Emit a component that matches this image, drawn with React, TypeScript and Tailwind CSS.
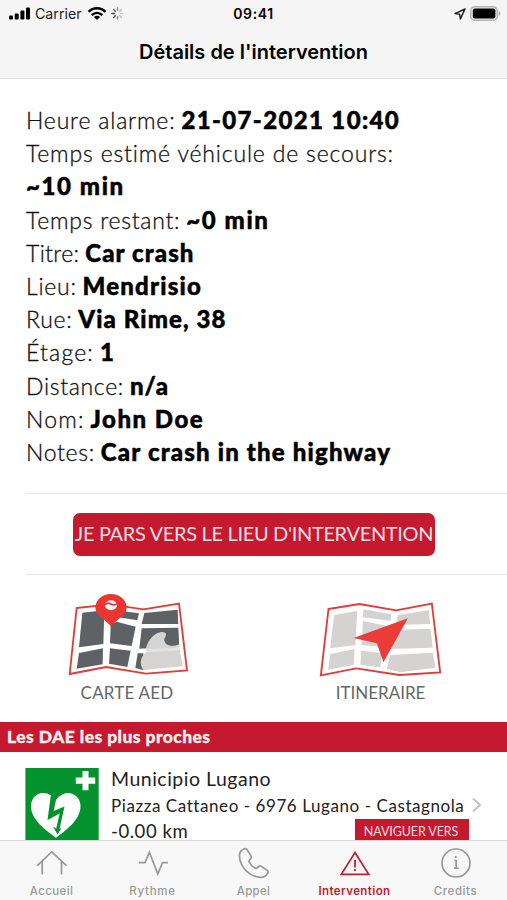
import type { ReactNode } from "react";

type Detail = { label: string; value: string; labelClass: string; valueClass: string; stacked?: boolean };

const details: Detail[] = [
  { label: "Heure alarme:", value: "21-07-2021 10:40", labelClass: "tracking-[0.82px]", valueClass: "tracking-[1.36px]" },
  { label: "Temps estimé véhicule de secours:", value: "~10 min", labelClass: "tracking-[0.83px]", valueClass: "tracking-[1.6px]", stacked: true },
  { label: "Temps restant:", value: "~0 min", labelClass: "tracking-[0.75px]", valueClass: "tracking-[1.6px]" },
  { label: "Titre:", value: "Car crash", labelClass: "tracking-[0.35px]", valueClass: "tracking-[1.1px]" },
  { label: "Lieu:", value: "Mendrisio", labelClass: "tracking-[0.75px]", valueClass: "tracking-[1.2px]" },
  { label: "Rue:", value: "Via Rime, 38", labelClass: "tracking-[0.7px]", valueClass: "tracking-[1.1px]" },
  { label: "Étage:", value: "1", labelClass: "tracking-[1.2px]", valueClass: "tracking-[0.6px]" },
  { label: "Distance:", value: "n/a", labelClass: "tracking-[0.68px]", valueClass: "tracking-[0.9px]" },
  { label: "Nom:", value: "John Doe", labelClass: "tracking-[1.2px]", valueClass: "tracking-[1.5px]" },
  { label: "Notes:", value: "Car crash in the highway", labelClass: "tracking-[0.7px]", valueClass: "tracking-[1.18px]" },
];

function StatusBar() {
  return (
    <div className="grid h-[27px] grid-cols-3 items-center">
      <div className="flex items-center pl-[9px]">
        <svg width="22" height="13" viewBox="0 0 22 13" fill="#000">
          <rect x="0" y="8.6" width="4" height="4" rx="1" />
          <rect x="5.7" y="6.4" width="4" height="6.2" rx="1" />
          <rect x="11.4" y="3.6" width="4" height="9" rx="1" />
          <rect x="17" y="0.4" width="4" height="12.2" rx="1" />
        </svg>
        <span className="ml-1 text-[14.2px] text-[#222]">Carrier</span>
        <svg className="ml-[5px]" width="20" height="15" viewBox="0 0 20 15" fill="none" stroke="#000">
          <path d="M1.6 5.8a11.8 11.8 0 0 1 16.8 0" strokeWidth="2.6" />
          <path d="M4.8 9.1a7.3 7.3 0 0 1 10.4 0" strokeWidth="2.4" />
          <path d="M10 14 6.9 11a4.4 4.4 0 0 1 6.2 0Z" fill="#000" stroke="none" />
        </svg>
        <svg className="ml-[4px]" width="13" height="13" viewBox="0 0 13 13" strokeWidth="1.4" strokeLinecap="round">
          <path d="M6.5 1v2.6" stroke="#888" />
          <path d="m10.4 2.6-1.8 1.8" stroke="#bbb" />
          <path d="M12 6.5H9.4" stroke="#ccc" />
          <path d="m10.4 10.4-1.8-1.8" stroke="#bbb" />
          <path d="M6.5 12V9.4" stroke="#888" />
          <path d="m2.6 10.4 1.8-1.8" stroke="#555" />
          <path d="M1 6.5h2.6" stroke="#444" />
          <path d="m2.6 2.6 1.8 1.8" stroke="#666" />
        </svg>
      </div>
      <div className="text-center text-[14px] font-semibold tracking-[0.6px]">09:41</div>
      <div className="flex items-center justify-end pr-[6px]">
        <svg width="12" height="12" viewBox="0 0 12 12" fill="none" stroke="#222" strokeWidth="1.5" strokeLinejoin="round">
          <path d="M11 1 1 5.6l4.7.7.7 4.7Z" />
        </svg>
        <svg className="ml-1" width="31" height="15" viewBox="0 0 31 15">
          <rect x="0.8" y="0.8" width="26.4" height="13.4" rx="3.8" fill="#eee" stroke="#b5b5b5" strokeWidth="1.5" />
          <rect x="2.8" y="2.6" width="22.6" height="9.8" rx="2" fill="#000" />
          <path d="M28.7 5v5c1.2-.5 1.7-1.4 1.7-2.5s-.5-2-1.7-2.500Z" fill="#aaa" />
        </svg>
      </div>
    </div>
  );
}

function AedMap() {
  return (
    <svg width="124" height="86" viewBox="45 24 372 258">
      <path d="M80 69 180 58 280 73 387 56 411 256 288 266 168 246 59 267Z" fill="#fff" stroke="#e23b38" strokeWidth="5.5" />
      <g fill="#5f6264">
        <path d="M97 83 163 76 160 177 87 187Z" />
        <path d="M87 204 159 190 158 238 80 251Z" />
        <path d="M215 78 267 85 262 106 205 97Z" />
        <path d="M182 118 200 110 257 125 245 183 180 175Z" />
        <path d="M180 190 242 197 232 246 177 236Z" />
        <path d="M283 84 383 74 385 117 275 117Z" />
        <path d="M275 130 385 128 388 184 268 191Z" />
        <path d="M263 205 280 205 282 256 256 249Z" />
      </g>
      <path d="M280 255C268 238 270 215 289 200 284 180 305 150 325 143 350 135 352 150 343 160 340 182 365 188 387 178L398 244Z" fill="#d6d4d3" />
      <path d="M270 200C310 190 350 200 392 190" fill="none" stroke="#fff" strokeWidth="9" opacity="0.35" />
      <path d="M183 124C170 105 136 92 136 68a47 41 0 0 1 94 0C230 92 196 105 183 124Z" fill="#ea3530" />
      <ellipse cx="183" cy="61" rx="18" ry="15" fill="#fff" />
      <path d="M163 60q10-9 19-3t20-1" stroke="#ea3530" strokeWidth="5" fill="none" />
    </svg>
  );
}

function RouteMap() {
  return (
    <svg width="124" height="86" viewBox="58.5 24 372 258">
      <path d="M87 72 180 57 290 76 397 56 422 262 300 270 170 250 64 271Z" fill="#fff" stroke="#e23b38" strokeWidth="5.5" />
      <g fill="#d5d3d1">
        <path d="M104 90 173 78 168 180 92 190Z" />
        <path d="M192 73 275 88 273 107 190 97Z" />
        <path d="M190 108 260 122 245 185 187 180Z" />
        <path d="M295 90 388 76 392 117 290 120Z" />
        <path d="M280 135 393 131 400 188 268 192Z" />
        <path d="M92 207 165 192 163 240 86 254Z" />
        <path d="M185 197 248 205 242 247 183 240Z" />
        <path d="M272 210 400 203 408 248 303 262 262 252Z" />
      </g>
      <path d="M325 100 162 159 232 175 252 232Z" fill="#ea3c38" />
    </svg>
  );
}

function AedSign() {
  return (
    <svg className="shrink-0" width="74" height="73" viewBox="0 0 74 73">
      <rect x="0.4" width="73.3" height="73" fill="#04922f" />
      <path d="M57.500 3h6v6.500h6.700v6.300h-6.700v6.500h-6v-6.500h-6.700V9.500h6.700Z" fill="#fff" />
      <path d="M31 69.700C22 63 6 52 6 38.500c0-8 5-13.500 12-13.500 6 0 10 3 13 7 3-4 7-7 12-7 7 0 12.500 5.500 12.500 13.500C55.500 52 40 63 31 69.700Z" fill="#fff" />
      <path d="m26 26 5.500 3.500L28.700 43l10.800-4.500L34.500 61l2-1L32.500 66.500 28 58.500l3.200 2L34.700 45.500 22.500 52Z" fill="#04922f" />
    </svg>
  );
}

const tabs: { name: string; active?: boolean; tracking: string; icon: ReactNode }[] = [
  { name: "Accueil", tracking: "tracking-[0.4px]", icon: <path d="M1.200 16.700 15.800 3l14.700 13.700M6.200 12.500V25.500M25.500 12.500V25.500" /> },
  { name: "Rythme", tracking: "tracking-[0.7px]", icon: <path d="M2 13.700h6L12.400 3.300 20.800 25 25.500 13.700h5.500" /> },
  { name: "Appel", tracking: "tracking-[0.3px]", icon: <path d="M6.500-.2C3.500.8 1.200 3.500 1.500 7.500 2.300 18.500 11.500 27.700 22.500 28.300c3.200.2 5.700-1.500 7.300-4.300.6-1 .3-1.900-.6-2.600l-5.700-4c-1-.7-2-.6-2.900.1l-1.800 1.500c-.7.5-1.300.5-2 .1-2.400-1.400-4.300-3.500-5.600-6-.4-.7-.3-1.300.2-1.900L12.700 9.500c.7-.8.7-1.700.2-2.600L9.300 1C8.700 0 7.700-.6 6.500-.2Z" /> },
  { name: "Intervention", active: true, tracking: "tracking-[0.4px]", icon: <><path d="M16 3.500 29.700 25.300H2.300Z" /><path d="M16 11v7.500M16 20v2" strokeWidth="1.800" /></> },
  { name: "Credits", tracking: "tracking-[0.6px]", icon: <><circle cx="16" cy="14" r="14" /><path d="M14.500 11.500h1.700V19M14 19.200h4.500M15.800 7v2" /></> },
];

export default function App() {
  return (
    <div className="flex h-[900px] w-[507px] flex-col overflow-hidden bg-white font-['Lato',sans-serif] text-black">
      <header className="h-[79px] shrink-0 border-b border-[#e2e2e2] bg-[#f5f5f5] font-['Inter',sans-serif]">
        <StatusBar />
        <h1 className="mt-[10px] text-center text-[20px] leading-[30px] font-semibold">Détails de l'intervention</h1>
      </header>

      <main className="flex min-h-0 flex-1 flex-col">
        <section className="ml-[26px] h-[415px] shrink-0 border-b border-[#e6e6e6] pt-[25px] text-[23px] leading-[33.2px] whitespace-nowrap">
          {details.map((d) => (
            <div key={d.label}>
              <span className={`font-light text-[#111] [-webkit-text-stroke:0.3px_#111] ${d.labelClass}`}>{d.label}</span>
              {d.stacked ? <br /> : " "}
              <span className={`text-[24px] leading-[1] font-black [-webkit-text-stroke:0.5px_black] ${d.valueClass}`}>{d.value}</span>
            </div>
          ))}
        </section>

        <section className="ml-[26px] flex h-[81px] shrink-0 border-b border-[#e6e6e6] pt-[19px] pl-[47px]">
          <button className="flex h-[43px] w-[362px] justify-center rounded-[7px] bg-[#c5192f] text-[20px] leading-[40px] tracking-[-0.33px] whitespace-nowrap text-[#fbdfe2]">JE PARS VERS LE LIEU D'INTERVENTION</button>
        </section>

        <section className="flex h-[147px] shrink-0 pt-[18px] text-[17px] text-[#666]">
          <div className="flex w-[254px] flex-col items-center">
            <AedMap />
            <span className="leading-[27px] tracking-[0.2px]">CARTE AED</span>
          </div>
          <div className="flex w-[253px] flex-col items-center">
            <RouteMap />
            <span className="leading-[27px]">ITINERAIRE</span>
          </div>
        </section>

        <h2 className="h-[30px] shrink-0 bg-[#c5192f] pl-[7px] text-[17.5px] leading-[30px] font-black tracking-[0.42px] text-[#fff0f0] [-webkit-text-stroke:0.3px_#fff0f0]">Les DAE les plus proches</h2>

        <section className="flex pt-4 pl-[25px] whitespace-nowrap text-[#222]">
          <AedSign />
          <div className="ml-3 w-[358px] shrink-0">
            <div className="text-[19.5px] leading-[21px] tracking-[0.5px]">Municipio Lugano</div>
            <div className="mt-[6px] text-[17px] leading-[22px] tracking-[0.57px]">Piazza Cattaneo - 6976 Lugano - Castagnola</div>
            <div className="flex justify-between">
              <span className="mt-[3px] text-[18.5px] leading-[22px] tracking-[0.55px]">-0.00 km</span>
              <span className="mt-[2px] h-[26px] w-[114px] bg-[#c5192f] pr-[2px] text-center text-[12.5px] leading-[26px] tracking-[-0.1px] text-[#fbdfe2]">NAVIGUER VERS</span>
            </div>
          </div>
          <svg className="mt-[29px] ml-[2px]" width="12" height="16" viewBox="0 0 12 16" fill="none" stroke="#c2c2c6" strokeWidth="2">
            <path d="m2 1.500 7 6.500-7 6.500" />
          </svg>
        </section>
      </main>

      <nav className="z-10 grid h-[60px] shrink-0 grid-cols-5 border-t border-[#d8d8d8] bg-[#f8f8f8] px-px font-['Inter',sans-serif]">
        {tabs.map((t) => (
          <div key={t.name} className={`flex flex-col items-center pt-[8px] ${t.active ? "text-[#c5192f]" : "text-[#999]"}`}>
            <svg className="overflow-visible" width="32" height="30" viewBox="0 0 32 30" fill="none" stroke="currentColor" strokeWidth="1.700">{t.icon}</svg>
            <span className={`mt-1 text-[11.5px] leading-[16px] ${t.active ? "font-semibold" : "font-medium"} ${t.tracking}`}>{t.name}</span>
          </div>
        ))}
      </nav>
    </div>
  );
}
